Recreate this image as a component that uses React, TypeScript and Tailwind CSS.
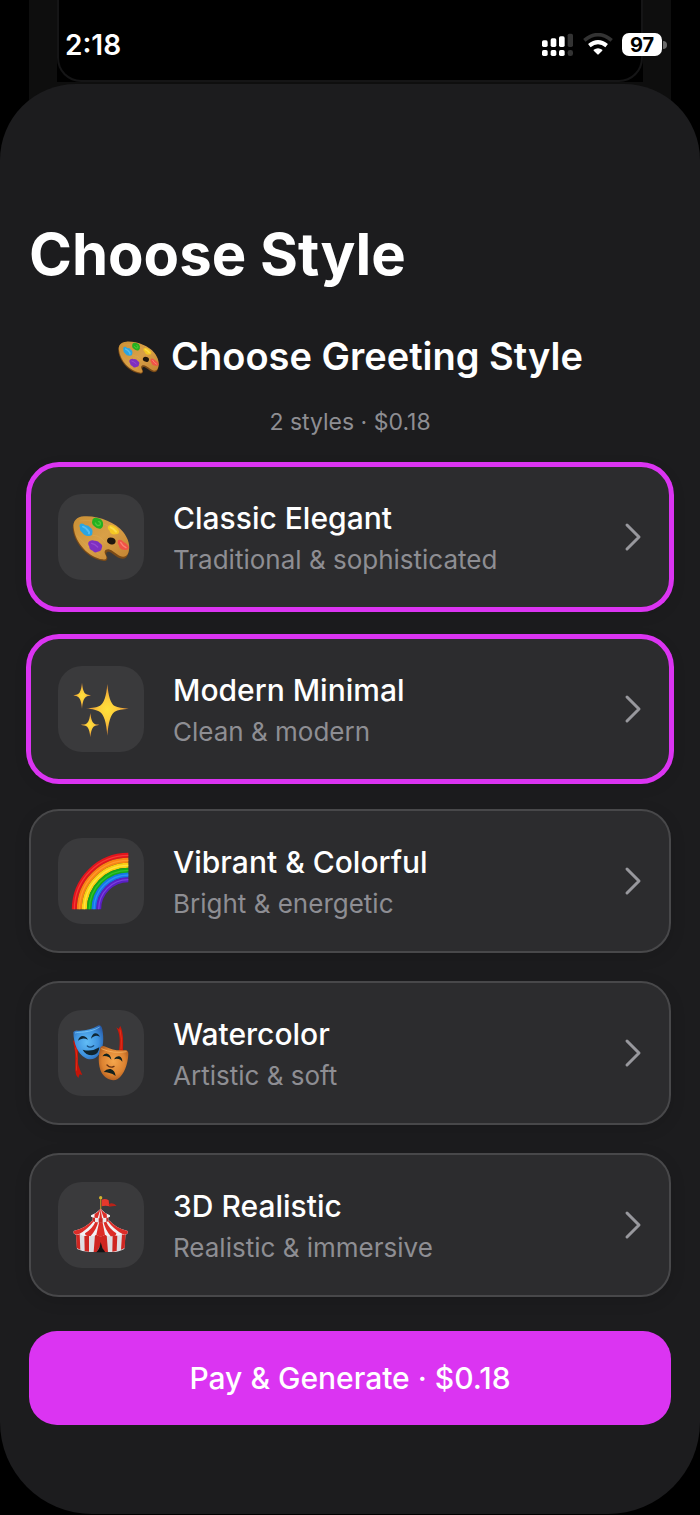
import { useState } from 'react';
import type { ReactNode } from 'react';

function PaletteIcon({ className }: { className: string }) {
  return (
    <svg viewBox="151 155 180 180" className={className} aria-hidden="true">
      <defs>
        <linearGradient id="wood" x1="0" y1="0" x2="1" y2="1">
          <stop offset="0" stopColor="#c98f35" />
          <stop offset="0.5" stopColor="#d9a047" />
          <stop offset="1" stopColor="#c28231" />
        </linearGradient>
      </defs>
      <path d="M157 224C154 201 166 187 190 185C232 182 284 204 306 231C323 252 330 276 322 297C318 309 309 313 298 309C287 305 275 292 265 289C257 288 254 295 259 304C263 312 257 319 246 316C204 311 163 268 157 224Z" fill="#7a4a17" />
      <path d="M159 217C156 198 168 184 190 183C232 180 284 201 307 229C323 249 330 272 323 292C319 303 309 307 298 302C287 297 275 284 264 282C252 281 249 290 255 299C260 308 257 315 246 312C204 306 164 263 159 217Z" fill="url(#wood)" />
      <path d="M176 197Q225 188 285 224M168 240Q200 278 238 299M216 240Q240 240 256 265" stroke="#e6b760" strokeWidth="2" fill="none" opacity="0.4" />
      <ellipse cx="272" cy="257" rx="13" ry="10" transform="rotate(20 272 257)" fill="#1f160e" />
      <path d="M180 205Q187 202 194 210Q203 209 208 216Q218 222 215 234Q215 243 203 242Q190 241 185 232Q176 226 178 218Q174 208 180 205Z" fill="#2ba5e3" />
      <path d="M187 214Q196 217 202 226Q207 230 205 234" stroke="#5fc4f4" strokeWidth="6" fill="none" strokeLinecap="round" opacity="0.8" />
      <path d="M216 192Q222 185 232 189Q244 191 247 202Q249 215 240 220Q229 222 221 213Q211 207 216 192Z" fill="#24b020" />
      <path d="M224 203Q229 214 238 209Q242 201 234 199" stroke="#4fcb38" strokeWidth="4" fill="none" strokeLinecap="round" />
      <path d="M263 212Q269 206 279 211Q291 216 295 228Q296 238 284 237Q270 239 267 226Q258 219 263 212Z" fill="#f4c823" />
      <path d="M270 216Q279 219 286 229" stroke="#fbdc4c" strokeWidth="6" fill="none" strokeLinecap="round" />
      <path d="M292 255Q300 250 309 260Q323 268 325 278Q321 287 309 283Q297 282 295 271Q288 263 292 255Z" fill="#f05347" />
      <path d="M300 261Q305 271 316 277" stroke="#fb8272" strokeWidth="4" fill="none" strokeLinecap="round" />
      <path d="M206 258Q214 252 222 256Q233 255 238 264Q248 270 243 279Q243 288 231 289Q222 295 216 286Q205 281 206 274Q199 264 206 258Z" fill="#7f2fc0" />
      <path d="M213 264Q223 266 231 275" stroke="#9548d2" strokeWidth="4" fill="none" strokeLinecap="round" />
    </svg>
  );
}

function SparklesIcon({ className }: { className: string }) {
  return (
    <svg viewBox="62 56 180 180" className={className} aria-hidden="true">
      <defs>
        <radialGradient id="spark">
          <stop offset="0" stopColor="#ffe13a" />
          <stop offset="0.4" stopColor="#fdcd3b" />
          <stop offset="1" stopColor="#e28a35" />
        </radialGradient>
      </defs>
      <g fill="url(#spark)">
        <path d="M171 71C174 108 181 130 193 137C203 142 216 143 235 145C216 147 203 148 193 154C181 162 174 186 171 226C168 186 161 163 149 155C140 149 128 147 107 144C128 142 140 141 149 136C161 128 168 108 171 71Z" />
        <path d="M95 67C97 86 100 97 107 101C111 103 115 103 122 105C115 107 111 107 107 110C100 114 97 125 95 145C93 125 90 114 83 110C79 107 76 107 69 105C76 103 79 103 83 101C90 97 93 86 95 67Z" />
        <path d="M120 158C122 175 125 186 132 190C136 192 140 192 147 193C140 195 136 195 132 198C125 202 122 213 120 231C118 213 115 202 108 198C104 195 99 195 91 193C99 192 104 192 108 190C115 186 118 175 120 158Z" />
      </g>
    </svg>
  );
}

// outer to inner
const bands = [
  { r: 162, color: '#e3141c', shine: '#fb4a41' },
  { r: 147, color: '#fb8312', shine: '#ffa13b' },
  { r: 132, color: '#fbd012', shine: '#ffe855' },
  { r: 117, color: '#15ab18', shine: '#40cb38' },
  { r: 103, color: '#1377e8', shine: '#3b98fb' },
  { r: 89, color: '#5a1fc4', shine: '#8a50ea' },
];

function RainbowIcon({ className }: { className: string }) {
  return (
    <svg viewBox="62 63 180 180" className={className} aria-hidden="true" fill="none">
      {bands.map((band) => (
        <g key={band.color}>
          <path d={`M${234 - band.r} 238A${band.r} ${band.r} 0 0 1 234 ${238 - band.r}`} stroke={band.color} strokeWidth="15" />
          <path d={`M${234 - band.r} 238A${band.r} ${band.r} 0 0 1 234 ${238 - band.r}`} stroke={band.shine} strokeWidth="4" opacity="0.7" />
        </g>
      ))}
    </svg>
  );
}

function MasksIcon({ className }: { className: string }) {
  return (
    <svg viewBox="62 56 180 180" className={className} aria-hidden="true">
      <defs>
        <radialGradient id="happy" cx="0.45" cy="0.5" r="0.65">
          <stop offset="0" stopColor="#62bdf6" />
          <stop offset="0.6" stopColor="#3f93df" />
          <stop offset="1" stopColor="#265aa8" />
        </radialGradient>
        <radialGradient id="sad" cx="0.5" cy="0.45" r="0.65">
          <stop offset="0" stopColor="#f5a64c" />
          <stop offset="0.6" stopColor="#dd8331" />
          <stop offset="1" stopColor="#9c4c18" />
        </radialGradient>
      </defs>
      <path d="M68 108L80 116C88 142 77 170 87 190Q90 200 96 212L88 210L84 221Q75 212 75 199C74 176 76 150 73 136Z" fill="#c41408" />
      <path d="M76 130Q83 160 78 199" stroke="#e02e18" strokeWidth="3" fill="none" />
      <path d="M198 69L205 74L210 65C220 88 219 110 218 142L206 138C210 112 209 88 198 69Z" fill="#c9180a" />
      <path d="M209 76Q216 104 212 135" stroke="#e0321c" strokeWidth="3" fill="none" />
      <path d="M69 83Q74 77 83 79Q115 81 145 63Q153 62 156 75C161 103 160 131 147 149C137 164 119 170 104 160C83 149 70 119 69 83Z" fill="url(#happy)" />
      <path d="M74 86C84 82 117 87 148 68" stroke="#86d0fa" strokeWidth="3" fill="none" opacity="0.7" />
      <path d="M83 109Q87 95 97 95Q107 95 113 106Q103 101 96 103Q88 104 83 109Z" fill="#0f2634" />
      <path d="M122 103Q125 89 134 87Q143 86 149 97Q140 93 134 95Q127 97 122 103Z" fill="#0f2634" />
      <path d="M111 125Q119 132 130 124" stroke="#174a7c" strokeWidth="4" fill="none" strokeLinecap="round" />
      <path d="M97 136Q124 144 147 129Q146 151 125 153Q106 153 97 136Z" fill="#10242e" />
      <path d="M151 128Q158 122 166 127Q193 141 225 137Q234 138 234 149C233 179 221 212 202 224C187 233 164 224 153 204C143 183 143 152 151 128Z" fill="url(#sad)" />
      <path d="M153 133Q189 149 229 142" stroke="#f9bb68" strokeWidth="3" fill="none" opacity="0.7" />
      <path d="M156 156Q162 146 171 148Q181 151 183 166Q177 157 169 156Q162 154 156 156Z" fill="#12221f" />
      <path d="M191 165Q197 154 207 156Q216 160 216 172Q211 165 205 164Q197 162 191 165Z" fill="#12221f" />
      <path d="M170 182Q179 192 191 186" stroke="#6c3413" strokeWidth="4" fill="none" strokeLinecap="round" />
      <path d="M160 203Q169 192 181 194Q194 198 196 215Q187 207 177 206Q168 203 160 203Z" fill="#13211e" />
    </svg>
  );
}

function CircusIcon({ className }: { className: string }) {
  return (
    <svg viewBox="62 63 180 180" className={className} aria-hidden="true">
      <path d="M151 70V112" stroke="#a58a28" strokeWidth="4" />
      <circle cx="151" cy="71" r="5" fill="#d3b32e" />
      <path d="M154 77Q165 72 175 79L177 97Q166 93 154 97Z" fill="#e6382c" />
      <path d="M175 90Q190 84 199 96Q188 95 177 98Z" fill="#b82218" />
      {/* walls */}
      <path d="M77 176L80 225Q102 236 125 234H178Q203 236 222 225L226 176Z" fill="#dedee2" />
      <path d="M77 178L79 222L90 227L88 180ZM102 182L103 231L116 233V182ZM134 182L130 234H140L151 212L162 234H173L169 182ZM187 182L186 233L199 231L201 182ZM215 180L212 227L223 222L226 178Z" fill="#cf2621" />
      <path d="M151 204Q149 222 138 235H165Q154 222 151 204Z" fill="#141112" />
      {/* big roof */}
      <path d="M125 140Q106 162 70 171V178Q78 187 89 180Q101 191 115 182Q127 192 138 182Q151 192 164 182Q176 192 189 182Q202 189 213 180Q225 186 232 178V171Q196 162 178 140Z" fill="#f2f2f5" />
      <path d="M125 140Q106 162 70 171V178Q77 185 85 181Q112 166 131 141ZM136 142Q127 164 104 178Q104 188 121 186Q139 166 144 142ZM147 142L138 182Q151 192 164 182L156 142ZM159 142Q164 166 181 187Q198 188 198 178Q176 164 167 142ZM172 141Q190 166 218 181Q227 184 232 178V171Q196 162 178 140Z" fill="#dc2d28" />
      {/* top tier */}
      <path d="M127 125V142Q151 149 174 142V125Z" fill="#ececef" />
      <path d="M127 126V142L134 144V126ZM145 126V146H157V126ZM168 126V144L174 142V126Z" fill="#c92723" />
      <path d="M151 104Q138 118 122 124V128Q136 134 151 132Q167 134 179 128V124Q163 118 151 104Z" fill="#f1f1f4" />
      <path d="M151 104Q143 115 133 120L132 131L142 132ZM151 104Q159 115 169 120L170 131L160 132ZM151 104L147 132H155Z" fill="#dc2d28" />
    </svg>
  );
}

function SignalIcon() {
  return (
    <svg viewBox="0 0 96 72" className="h-6 w-8" role="img" aria-label="Signal strength">
      <g fill="#fff">
        <rect x="0" y="22" width="17" height="20" rx="5" />
        <rect x="26" y="16" width="17" height="26" rx="5" />
        <rect x="51" y="10" width="17" height="32" rx="5" />
        <rect x="0" y="51" width="17" height="18" rx="5" />
        <rect x="26" y="51" width="17" height="18" rx="5" />
        <rect x="51" y="51" width="17" height="18" rx="5" />
      </g>
      <g fill="#333">
        <rect x="77" y="2" width="16" height="40" rx="5" />
        <rect x="77" y="51" width="16" height="18" rx="7" />
      </g>
    </svg>
  );
}

function WifiIcon() {
  return (
    <svg viewBox="0 0 90 72" className="h-6 w-[30px]" role="img" aria-label="Wi-Fi" fill="none">
      <path d="M4 22Q45 -12 86 22" stroke="#333" strokeWidth="11" />
      <path d="M19 38Q45 17 71 38" stroke="#fff" strokeWidth="12" />
      <path d="M32 50Q45 41 58 50Q59 52 57 54L47 64Q45 66 43 64L33 54Q31 52 32 50Z" fill="#fff" />
    </svg>
  );
}

type Style = {
  id: string;
  title: string;
  description: string;
  icon: ReactNode;
};

const styles: Style[] = [
  { id: 'classic', title: 'Classic Elegant', description: 'Traditional & sophisticated', icon: <PaletteIcon className="size-[60px]" /> },
  { id: 'modern', title: 'Modern Minimal', description: 'Clean & modern', icon: <SparklesIcon className="size-[60px]" /> },
  { id: 'vibrant', title: 'Vibrant & Colorful', description: 'Bright & energetic', icon: <RainbowIcon className="size-[60px]" /> },
  { id: 'watercolor', title: 'Watercolor', description: 'Artistic & soft', icon: <MasksIcon className="size-[60px]" /> },
  { id: 'realistic', title: '3D Realistic', description: 'Realistic & immersive', icon: <CircusIcon className="size-[60px]" /> },
];

const PRICE_PER_STYLE = 0.09;

function StyleCard({ style, selected, onToggle }: { style: Style; selected: boolean; onToggle: () => void }) {
  return (
    <button
      type="button"
      aria-pressed={selected}
      onClick={onToggle}
      className={`flex w-full items-center gap-[29px] rounded-[30px] border-2 bg-[#2c2c2e] px-[27px] py-[27px] text-left shadow-[0_4px_16px_rgba(0,0,0,0.12)] ${selected ? 'border-[#db34f2] ring-[3px] ring-[#db34f2]' : 'border-[#48484a]'}`}
    >
      <span className="flex size-[86px] shrink-0 items-center justify-center rounded-3xl bg-[#3a3a3c]">{style.icon}</span>
      <span className="flex min-w-0 flex-1 flex-col pt-[3px]">
        <span className="text-[30px] leading-[41px] font-medium text-white">{style.title}</span>
        <span className="text-[26px] leading-[41px] text-[#8e8e93]">{style.description}</span>
      </span>
      <svg viewBox="0 0 18 30" className="h-[30px] w-[18px] shrink-0" fill="none" stroke="#98989d" strokeWidth="3" strokeLinecap="round" strokeLinejoin="round" aria-hidden="true">
        <path d="M3 3L15 15L3 27" />
      </svg>
    </button>
  );
}

export default function App() {
  const [selected, setSelected] = useState<string[]>(['classic', 'modern']);
  const total = `$${(selected.length * PRICE_PER_STYLE).toFixed(2)}`;

  const toggle = (id: string) => {
    setSelected((ids) => (ids.includes(id) ? ids.filter((item) => item !== id) : [...ids, id]));
  };

  return (
    <div className="flex min-h-screen flex-col bg-black font-['Inter',sans-serif] text-white">
      <header className="grid h-[110px]">
        {/* dimmed page behind the sheet */}
        <div className="col-start-1 row-start-1 mx-[29px] bg-[#0e0e0e] px-7">
          <div className="bg-black">
            <div className="h-[82px] rounded-b-3xl border-x-2 border-b-2 border-[#151516]" />
          </div>
        </div>
        <div className="col-start-1 row-start-1 flex h-[89px] items-center justify-between pr-[33px] pl-[65px]">
          <time className="text-[28px] leading-8 font-semibold">2:18</time>
          <div className="flex items-center gap-[9px]">
            <SignalIcon />
            <WifiIcon />
            <div className="flex items-center gap-px">
              <span className="flex h-[23px] w-10 items-center justify-center rounded-[7px] bg-white text-[20px] leading-6 font-bold text-black">97</span>
              <span className="h-2 w-1 rounded-r-full bg-[#6b6b6b]" />
            </div>
          </div>
        </div>
      </header>

      <main className="-mt-[26px] mb-px flex flex-1 flex-col rounded-t-[76px] rounded-b-[92px] bg-[#1c1c1e] px-[29px] pt-[134px] pb-[89px]">
        <h1 className="text-[58px] leading-[72px] font-bold">Choose Style</h1>

        <h2 className="mt-[42px] flex items-center justify-center gap-[11px] text-[38px] leading-[48px] font-semibold">
          <PaletteIcon className="size-[43px]" />
          Choose Greeting Style
        </h2>
        <p className="mt-[26px] text-center text-[23px] leading-8 text-[#8e8e93]">
          {selected.length} styles · {total}
        </p>

        <div className="mt-[27px] flex flex-col gap-7">
          {styles.map((style) => (
            <StyleCard key={style.id} style={style} selected={selected.includes(style.id)} onToggle={() => toggle(style.id)} />
          ))}
        </div>

        <button type="button" className="mt-[34px] h-[94px] rounded-[28px] bg-[#db34f2] text-[30px] leading-9 font-medium text-white">
          Pay &amp; Generate · {total}
        </button>
      </main>
    </div>
  );
}
